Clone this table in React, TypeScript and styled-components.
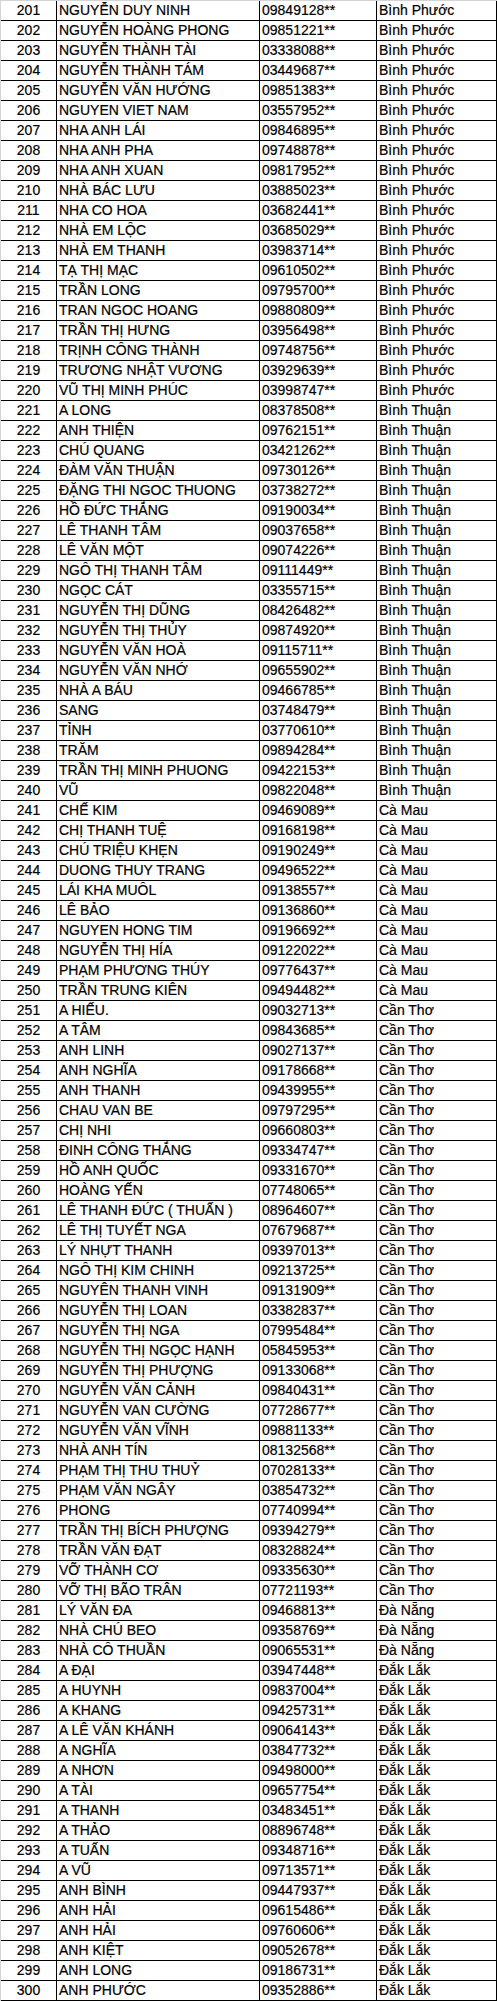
import React from 'react';
import styled, { createGlobalStyle } from 'styled-components';

const GlobalStyle = createGlobalStyle`
  html, body {
    margin: 0;
    padding: 0;
    background: #ffffff;
  }
`;

const Sheet = styled.div`
  width: 497px;
  box-sizing: border-box;
  border-left: 1px solid #d4d4d4;
  border-top: 1px solid #d4d4d4;
  font-family: "Liberation Sans", Arial, sans-serif;
  font-size: 14px;
  color: #000;
  -webkit-text-stroke: 0.2px #000;
`;

const Row = styled.div`
  display: grid;
  grid-template-columns: 56px 203px 117px 120px;
  height: 20px;
  box-sizing: border-box;
  border-bottom: 1px solid #000;
`;

const Cell = styled.div<{ align?: 'center' | 'left' }>`
  display: flex;
  align-items: flex-end;
  justify-content: ${(props) => (props.align === 'center' ? 'center' : 'flex-start')};
  box-sizing: border-box;
  padding: 0 0 2px ${(props) => (props.align === 'center' ? '0' : '2px')};
  border-right: 1px solid #000;
  white-space: nowrap;
  overflow: hidden;
  line-height: 16px;
`;

type Group = { province: string; rows: [string, string][] };

const groups: Group[] = [
  {
    province: 'Bình Phước',
    rows: [
      ['NGUYỄN DUY NINH', '09849128'],
      ['NGUYỄN HOÀNG PHONG', '09851221'],
      ['NGUYỄN THÀNH TÀI', '03338088'],
      ['NGUYỄN THÀNH TÁM', '03449687'],
      ['NGUYỄN VĂN HƯỚNG', '09851383'],
      ['NGUYEN VIET NAM', '03557952'],
      ['NHA ANH LÁI', '09846895'],
      ['NHA ANH PHA', '09748878'],
      ['NHA ANH XUAN', '09817952'],
      ['NHÀ BÁC LƯU', '03885023'],
      ['NHA CO HOA', '03682441'],
      ['NHÀ EM LỘC', '03685029'],
      ['NHÀ EM THANH', '03983714'],
      ['TẠ THỊ MẠC', '09610502'],
      ['TRẦN LONG', '09795700'],
      ['TRAN NGOC HOANG', '09880809'],
      ['TRẦN THỊ HƯNG', '03956498'],
      ['TRỊNH CÔNG THÀNH', '09748756'],
      ['TRƯƠNG NHẬT VƯƠNG', '03929639'],
      ['VŨ THỊ MINH PHÚC', '03998747'],
    ],
  },
  {
    province: 'Bình Thuận',
    rows: [
      ['A LONG', '08378508'],
      ['ANH THIỆN', '09762151'],
      ['CHÚ QUANG', '03421262'],
      ['ĐÀM VĂN THUẬN', '09730126'],
      ['ĐẶNG THI NGOC THUONG', '03738272'],
      ['HỒ ĐỨC THẮNG', '09190034'],
      ['LÊ THANH TÂM', '09037658'],
      ['LÊ VĂN MỘT', '09074226'],
      ['NGÔ THỊ THANH TÂM', '09111449'],
      ['NGỌC CÁT', '03355715'],
      ['NGUYỄN THỊ DŨNG', '08426482'],
      ['NGUYỄN THỊ THỦY', '09874920'],
      ['NGUYỄN VĂN HOÀ', '09115711'],
      ['NGUYỄN VĂN NHỚ', '09655902'],
      ['NHÀ A BÁU', '09466785'],
      ['SANG', '03748479'],
      ['TỈNH', '03770610'],
      ['TRĂM', '09894284'],
      ['TRẦN THỊ MINH PHUONG', '09422153'],
      ['VŨ', '09822048'],
    ],
  },
  {
    province: 'Cà Mau',
    rows: [
      ['CHẾ KIM', '09469089'],
      ['CHỊ THANH TUỆ', '09168198'],
      ['CHÚ TRIỆU KHẸN', '09190249'],
      ['DUONG THUY TRANG', '09496522'],
      ['LÁI KHA MUÔL', '09138557'],
      ['LÊ BẢO', '09136860'],
      ['NGUYEN HONG TIM', '09196692'],
      ['NGUYỄN THỊ HÍA', '09122022'],
      ['PHẠM PHƯƠNG THÚY', '09776437'],
      ['TRẦN TRUNG KIÊN', '09494482'],
    ],
  },
  {
    province: 'Cần Thơ',
    rows: [
      ['A HIẾU.', '09032713'],
      ['A TÂM', '09843685'],
      ['ANH LINH', '09027137'],
      ['ANH NGHĨA', '09178668'],
      ['ANH THANH', '09439955'],
      ['CHAU VAN BE', '09797295'],
      ['CHỊ NHI', '09660803'],
      ['ĐINH CÔNG THẮNG', '09334747'],
      ['HỒ ANH QUỐC', '09331670'],
      ['HOÀNG YẾN', '07748065'],
      ['LÊ THANH ĐỨC ( THUẤN )', '08964607'],
      ['LÊ THỊ TUYẾT NGA', '07679687'],
      ['LÝ NHỰT THANH', '09397013'],
      ['NGÔ THỊ KIM CHINH', '09213725'],
      ['NGUYÊN THANH VINH', '09131909'],
      ['NGUYỄN THỊ LOAN', '03382837'],
      ['NGUYỄN THỊ NGA', '07995484'],
      ['NGUYỄN THỊ NGỌC HẠNH', '05845953'],
      ['NGUYỄN THỊ PHƯỢNG', '09133068'],
      ['NGUYỄN VĂN CẢNH', '09840431'],
      ['NGUYỄN VAN CƯỜNG', '07728677'],
      ['NGUYỄN VĂN VĨNH', '09881133'],
      ['NHÀ ANH TÍN', '08132568'],
      ['PHẠM THỊ THU THUỶ', '07028133'],
      ['PHẠM VĂN NGÂY', '03854732'],
      ['PHONG', '07740994'],
      ['TRẦN THỊ BÍCH PHƯỢNG', '09394279'],
      ['TRẦN VĂN ĐẠT', '08328824'],
      ['VỠ THÀNH CƠ', '09335630'],
      ['VỠ THỊ BÃO TRÂN', '07721193'],
    ],
  },
  {
    province: 'Đà Nẵng',
    rows: [
      ['LÝ VĂN ĐA', '09468813'],
      ['NHÀ CHÚ BEO', '09358769'],
      ['NHÀ CÔ THUẦN', '09065531'],
    ],
  },
  {
    province: 'Đắk Lắk',
    rows: [
      ['A ĐẠI', '03947448'],
      ['A HUYNH', '09837004'],
      ['A KHANG', '09425731'],
      ['A LÊ VĂN KHÁNH', '09064143'],
      ['A NGHĨA', '03847732'],
      ['A NHƠN', '09498000'],
      ['A TÀI', '09657754'],
      ['A THANH', '03483451'],
      ['A THẢO', '08896748'],
      ['A TUẤN', '09348716'],
      ['A VŨ', '09713571'],
      ['ANH BÌNH', '09447937'],
      ['ANH HẢI', '09615486'],
      ['ANH HẢI', '09760606'],
      ['ANH KIỆT', '09052678'],
      ['ANH LONG', '09186731'],
      ['ANH PHƯỚC', '09352886'],
    ],
  },
];

const rows = groups.flatMap((g) => g.rows.map(([name, phone]) => ({ name, phone, province: g.province })));

function App() {
  return (
    <>
      <GlobalStyle />
      <Sheet>
        {rows.map((row, i) => (
          <Row key={201 + i}>
            <Cell align="center">{201 + i}</Cell>
            <Cell>{row.name}</Cell>
            <Cell>{`${row.phone}**`}</Cell>
            <Cell>{row.province}</Cell>
          </Row>
        ))}
      </Sheet>
    </>
  );
}

export default App;
